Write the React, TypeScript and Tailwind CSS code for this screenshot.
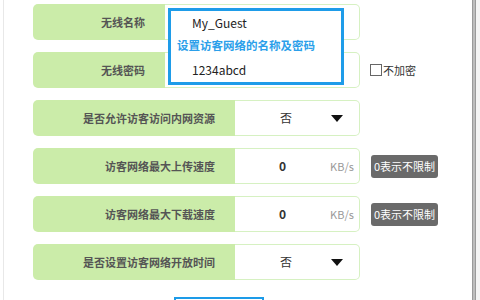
const rowBase = "flex h-[36px] w-[327px]";
const labelBase =
  "flex items-center justify-end bg-[#cbeca9] rounded-l-[5px] pr-[20px] text-[11px] font-bold text-[#555]";
const fieldBase =
  "relative flex items-center flex-1 bg-white border border-l-0 border-[#d6f1c2] rounded-r-[5px] text-[12px] text-[#333]";

function Caret() {
  return (
    <svg width="12" height="7" viewBox="0 0 12 7" className="absolute left-[96px] top-[14px]">
      <path d="M0 0 L12 0 L6 7 Z" fill="#111" />
    </svg>
  );
}

function Badge() {
  return (
    <span className="ml-[11px] inline-flex h-[23px] items-center rounded-[3px] bg-[#6a6a6a] px-[3px] text-[11px] text-white">
      0表示不限制
    </span>
  );
}

function SelectRow({ label }: { label: string }) {
  return (
    <div className={rowBase}>
      <div className={`${labelBase} w-[202px]`}>{label}</div>
      <div className={fieldBase}>
        <span className="ml-[45px]">否</span>
        <Caret />
      </div>
    </div>
  );
}

function SpeedRow({ label }: { label: string }) {
  return (
    <div className="flex items-center">
      <div className={rowBase}>
        <div className={`${labelBase} w-[202px]`}>{label}</div>
        <div className={fieldBase}>
          <span className="ml-[44px] font-bold">0</span>
          <span className="ml-[44px] text-[11px] text-[#999]">KB/s</span>
        </div>
      </div>
      <Badge />
    </div>
  );
}

export default function App() {
  return (
    <div className="flex h-[300px] w-[480px] overflow-hidden bg-white font-['Noto_Sans_CJK_SC',sans-serif]">
      <div className="w-[3px]" />
      <div className="relative flex-1 border-l border-[#e8e8e8] pl-[29px] pt-[4px]">
        <div className="flex flex-col gap-[12px]">
          <div className={rowBase}>
            <div className={`${labelBase} w-[132px]`}>无线名称</div>
            <div className={fieldBase} />
          </div>
          <div className="flex items-center">
            <div className={rowBase}>
              <div className={`${labelBase} w-[132px]`}>无线密码</div>
              <div className={fieldBase} />
            </div>
            <label className="ml-[10px] flex items-center text-[11px] text-[#333]">
              <span className="mr-[1px] inline-block h-[12px] w-[12px] border border-[#666] bg-white" />
              不加密
            </label>
          </div>
          <SelectRow label="是否允许访客访问内网资源" />
          <SpeedRow label="访客网络最大上传速度" />
          <SpeedRow label="访客网络最大下载速度" />
          <SelectRow label="是否设置访客网络开放时间" />
        </div>

        <div className="mt-[17px] ml-[141px] h-[10px] w-[90px] border-2 border-[#1d9be8] bg-white" />

        {/* annotation box over the name / password fields */}
        <div className="absolute left-[164px] top-[8px] flex h-[77px] w-[176px] flex-col border-[3px] border-[#1e9ce9] bg-white">
          <span className="ml-[21px] mt-[3px] text-[12px] leading-[18px] text-[#222]">My_Guest</span>
          <span className="ml-[6px] mt-[5px] text-[11.5px] font-bold leading-[16px] text-[#2b9fea]">
            设置访客网络的名称及密码
          </span>
          <span className="ml-[21px] mt-[8px] text-[12px] leading-[18px] text-[#222]">1234abcd</span>
        </div>
      </div>
      <div className="w-[4px] border-x border-[#9a9a9a] bg-[#bdbdbd]" />
      <div className="w-[4px] bg-[#f4f4f4]" />
    </div>
  );
}
